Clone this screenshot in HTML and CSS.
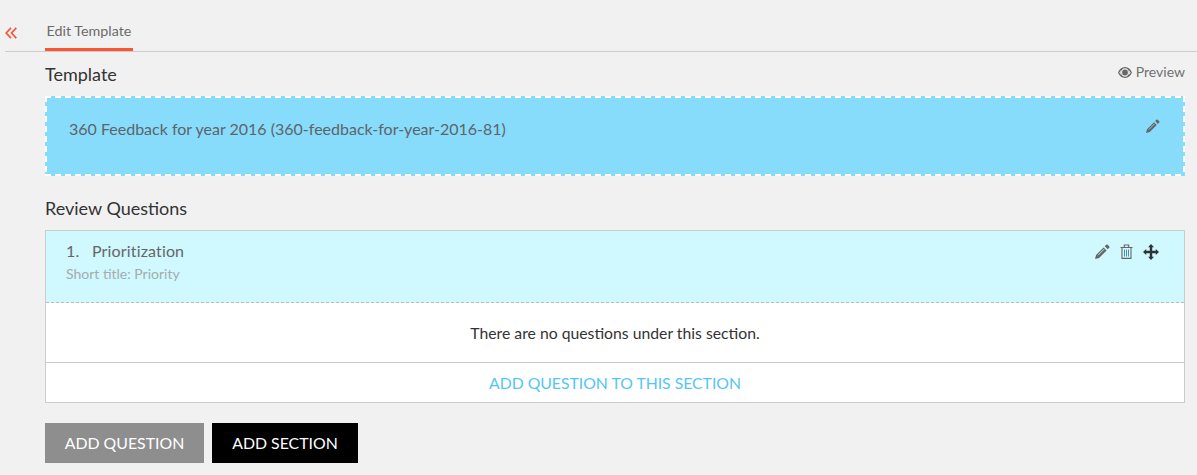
FILE: index.html
```html
<!DOCTYPE html>
<html lang="en">

<head>
    <meta charset="UTF-8">
    <title>Edit Template</title>
    <link rel="stylesheet" href="styles.css">
</head>

<body>
    <div class="tabs">
        <div class="back-link">
            <svg class="back-icon" viewBox="0 0 12 12" width="12" height="12">
                <path d="M6 .8 1.200 6 6 11.200M11.300 .8 6.500 6l4.800 5.200" fill="none" stroke="#fa5635" stroke-width="1.7"/>
            </svg>
        </div>
        <div class="tab-active">Edit Template</div>
    </div>

    <div class="content">
        <div class="section-head">
            <h2 class="section-title">Template</h2>
            <div class="preview">
                <svg class="preview-icon" viewBox="0 0 14 11" width="14" height="11">
                    <path fill-rule="evenodd" fill="#666" d="M7 0C3.800 0 1.300 2.200 0 5.500 1.300 8.800 3.800 11 7 11s5.700-2.200 7-5.500C12.700 2.200 10.200 0 7 0zM7 1.200c2.200 0 4 1.900 4 4.300S9.200 9.800 7 9.800 3 7.900 3 5.500 4.800 1.200 7 1.200zM1.300 5.500C1.800 4.500 2.500 3.600 3.300 2.900 2.500 4.500 2.500 6.500 3.300 8.100 2.500 7.400 1.800 6.500 1.300 5.500zM10.700 2.900c.8.700 1.500 1.600 2 2.600-.5 1-1.200 1.900-2 2.600.8-1.600.8-3.600 0-5.200zM7 2.600a2.900 2.900 0 1 0 0 5.800 2.900 2.900 0 0 0 0-5.800z"/>
                </svg>
                Preview
            </div>
        </div>

        <div class="template-box">
            <span class="template-name">360 Feedback for year 2016 (360-feedback-for-year-2016-81)</span>
            <svg class="icon" viewBox="0 0 14 14" width="14" height="14">
                <path fill="#666" d="M10.400.8a1 1 0 0 1 1.400 0l1.400 1.400a1 1 0 0 1 0 1.400l-1.300 1.300-2.800-2.800zM8 3.200 10.800 6l-7 7L0 14l1-3.800z"/>
                <path stroke="#87dcfc" stroke-width=".8" d="M2.800 10.500 8.500 4.800"/>
            </svg>
        </div>

        <h2 class="section-title questions-title">Review Questions</h2>

        <div class="question-card">
            <div class="question-head">
                <div>
                    <div class="question-title"><span class="question-num">1.</span>Prioritization</div>
                    <div class="short-title">Short title: Priority</div>
                </div>
                <div class="question-actions">
                    <svg class="icon" viewBox="0 0 14 14" width="15" height="15">
                        <path fill="#666" d="M10.400.8a1 1 0 0 1 1.400 0l1.400 1.400a1 1 0 0 1 0 1.400l-1.300 1.300-2.800-2.800zM8 3.200 10.800 6l-7 7L0 14l1-3.800z"/>
                        <path stroke="#cff8ff" stroke-width=".8" d="M2.800 10.500 8.500 4.800"/>
                    </svg>
                    <svg class="icon" viewBox="0 0 13 15" width="13" height="15">
                        <path fill="none" stroke="#666" stroke-width="1.100" d="M.5 3.500h12M2 3.500v10.900h9V3.500M4.300 3.500V1h4.400v2.500"/>
                        <path fill="none" stroke="#4d8fa8" d="M4.500 5.500v7M6.500 5.500v7M8.500 5.500v7"/>
                    </svg>
                    <svg class="icon" viewBox="0 0 16 16" width="16" height="16">
                        <path fill="#2d3338" d="M8 0l3 3.200H9.200v3.600h3.600V5L16 8l-3.200 3V9.200H9.200v3.600H11L8 16l-3-3.200h1.800V9.200H3.200V11L0 8l3.200-3v1.800h3.600V3.200H5z"/>
                    </svg>
                </div>
            </div>
            <div class="empty-row">There are no questions under this section.</div>
            <div class="add-row">ADD QUESTION TO THIS SECTION</div>
        </div>

        <div class="buttons">
            <button class="btn btn-grey">ADD QUESTION</button>
            <button class="btn btn-black">ADD SECTION</button>
        </div>
    </div>
</body>

</html>
```

FILE: styles.css
```css
* {
    margin: 0;
    padding: 0;
    box-sizing: border-box;
}

body {
    font-family: 'Lato', 'Liberation Sans', sans-serif;
    background: #f1f1f1;
    color: #333;
    font-size: 15.75px;
    height: 475px;
    overflow: hidden;
}

.tabs {
    display: flex;
    align-items: flex-end;
    height: 52px;
    margin-left: 5px;
    border-bottom: 1px solid #ccc;
}

.back-link {
    width: 40px;
    height: 24px;
    line-height: 0;
}

.tab-active {
    width: 88px;
    height: 29px;
    line-height: 18px;
    text-align: center;
    font-size: 14.3px;
    color: #6b6b6b;
    border-bottom: 3px solid #fa5635;
}

.content {
    padding: 0 12px 0 45px;
}

.section-head {
    display: flex;
    justify-content: space-between;
    height: 44px;
}

.section-title {
    font-size: 18px;
    font-weight: 400;
    line-height: 22px;
    color: #333;
}

.section-head .section-title {
    margin-top: 11px;
}

.preview {
    margin-top: 10px;
    font-size: 14px;
    line-height: 20px;
    color: #707070;
}

.preview-icon {
    vertical-align: -1px;
}

/* white dashes, wider than a 2px dashed border draws them */
.template-box {
    display: flex;
    justify-content: space-between;
    height: 80px;
    padding: 24px 25px 0 24px;
    background-color: #87dcfc;
    background-image:
        repeating-linear-gradient(to right, #fff 0 6px, transparent 6px 10px),
        repeating-linear-gradient(to right, #fff 0 6px, transparent 6px 10px),
        repeating-linear-gradient(to bottom, #fff 0 6px, transparent 6px 10px),
        repeating-linear-gradient(to bottom, #fff 0 6px, transparent 6px 10px);
    background-size: 100% 2px, 100% 2px, 2px 100%, 2px 100%;
    background-position: top, bottom, left, right;
    background-repeat: no-repeat;
}

.template-name {
    font-size: 16px;
    line-height: 18px;
    color: #5d6468;
}

.template-box .icon {
    margin-top: -1px;
}

.questions-title {
    margin-top: 21px;
    height: 33px;
}

.question-card {
    height: 173px;
    background: #fff;
    border: 1px solid #ccc;
}

.question-head {
    display: flex;
    justify-content: space-between;
    height: 72px;
    padding: 11px 25px 0 20px;
    background: #cff8ff;
    border-bottom: 1px dashed #bbb;
}

.question-title {
    font-size: 16px;
    line-height: 18px;
    letter-spacing: .15px;
    color: #666;
}

.question-num {
    display: inline-block;
    width: 26px;
}

.short-title {
    margin-top: 5px;
    font-size: 14px;
    line-height: 18px;
    color: #a3adad;
}

.question-actions {
    display: flex;
    align-items: flex-start;
    gap: 10px;
    margin-top: 2px;
}

.empty-row {
    height: 60px;
    line-height: 60px;
    text-align: center;
    color: #333;
    border-bottom: 1px solid #ccc;
}

.add-row {
    line-height: 40px;
    text-align: center;
    color: #55c5f5;
}

.buttons {
    display: flex;
    gap: 8px;
    margin-top: 20px;
}

.btn {
    height: 40px;
    padding: 0 0 2px;
    border: none;
    font-family: inherit;
    font-size: 15.85px;
    color: #fff;
}

.btn-grey {
    width: 159px;
    background: #8e8e8e;
}

.btn-black {
    width: 146px;
    background: #000;
}
```
